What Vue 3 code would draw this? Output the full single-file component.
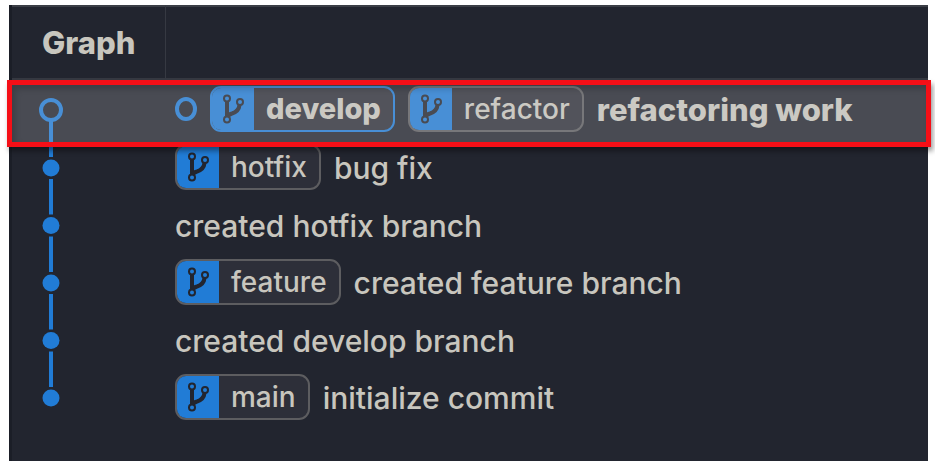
<script setup>
const commits = [
  { message: 'refactoring work', branches: ['develop', 'refactor'], head: true },
  { message: 'bug fix', branches: ['hotfix'] },
  { message: 'created hotfix branch', branches: [] },
  { message: 'created feature branch', branches: ['feature'] },
  { message: 'created develop branch', branches: [] },
  { message: 'initialize commit', branches: ['main'] },
]
const isCurrent = (commit, name) => Boolean(commit.head) && name === commit.branches[0]
</script>

<template>
  <main class="page">
    <table class="log">
      <thead>
        <tr>
          <th class="graph-head" scope="col">Graph</th>
          <td class="message-head"></td>
        </tr>
      </thead>
      <tbody>
        <tr v-for="(commit, i) in commits" :key="commit.message" class="row" :class="{ head: commit.head }">
          <td class="graph">
            <svg class="track" viewBox="0 0 26 58" preserveAspectRatio="xMidYMid slice" aria-hidden="true">
              <path v-if="i > 0" class="line" d="M13 0V19" />
              <path v-if="i < commits.length - 1" class="line" d="M13 41V58" />
              <circle v-if="commit.head" class="ring" cx="13" cy="30" r="10" />
              <circle v-else class="dot" cx="13" cy="30" r="8.5" />
            </svg>
          </td>
          <td class="description">
            <div class="content">
              <svg v-if="commit.head" class="marker" viewBox="0 0 22 24" aria-hidden="true">
                <ellipse class="marker-ring" cx="11" cy="12" rx="9" ry="10" />
              </svg>
              <span
                v-for="name in commit.branches"
                :key="name"
                class="branch"
                :class="{ current: isCurrent(commit, name) }"
              >
                <span class="badge">
                  <svg class="icon" viewBox="0 0 22 30" aria-hidden="true">
                    <path class="stem" d="M5 8V22" />
                    <path class="stem" d="M17.5 11C17 17 13 18.500 10 19.500Q6 20.500 5 24" />
                    <circle class="node" cx="5" cy="4.500" r="3" />
                    <circle class="node" cx="18" cy="8" r="3" />
                    <circle class="node" cx="5" cy="25.500" r="3" />
                  </svg>
                </span>
                <span class="name">{{ name }}</span>
              </span>
              <span class="message">{{ commit.message }}</span>
            </div>
            <div v-if="commit.head" class="highlight"></div>
          </td>
        </tr>
      </tbody>
    </table>
  </main>
</template>

<style>
body {
  background: #fff;
}
</style>

<style scoped>
.page {
  box-sizing: border-box;
  min-height: calc(100vh - 12px);
  margin: 5px 7px 7px 9px;
  background: #22252f;
  border-left: 3px solid #1b1e27;
  font-family: Inter, "Liberation Sans", sans-serif;
  font-size: 30px;
  font-weight: 500;
  line-height: 36px;
  color: #c8c6be;
}
.log {
  width: 100%;
  border-collapse: separate;
  border-spacing: 0;
}
.log th,
.log td {
  padding: 0;
}
.graph-head,
.message-head {
  box-sizing: border-box;
  height: 75px;
  border-top: 2px solid #3b3e46;
  border-bottom: 2px solid #363942;
}
.log .graph-head {
  width: 154px;
  padding-left: 30px;
  border-right: 1px solid #363942;
  text-align: left;
  font-size: 31px;
  font-weight: 800;
}
.row {
  position: relative;
}
.graph,
.description,
.track {
  height: 58px;
}
.row:nth-child(2n + 3) .graph,
.row:nth-child(2n + 3) .description,
.row:nth-child(2n + 3) .track {
  height: 57px;
}
.log .graph {
  padding-left: 26px;
}
.log .description {
  padding-left: 9px;
}
.track {
  display: block;
  width: 26px;
}
.line {
  fill: none;
  stroke: #217cd6;
  stroke-width: 4;
}
.dot {
  fill: #217cd6;
}
.ring,
.marker-ring {
  fill: none;
  stroke: #217cd6;
  stroke-width: 4;
}
.content {
  display: flex;
  align-items: center;
  gap: 13px;
  white-space: nowrap;
}
.marker {
  width: 22px;
  height: 24px;
}
.branch {
  display: flex;
  box-sizing: border-box;
  height: 46px;
  overflow: hidden;
  border: 2px solid #5d5d60;
  border-radius: 11px;
  background: #2d2f39;
  font-size: 28px;
}
.current {
  border-color: #217cd6;
}
.badge {
  display: flex;
  align-items: center;
  justify-content: center;
  width: 42px;
  background: #217cd6;
}
.icon {
  width: 22px;
  height: 30px;
}
.stem {
  fill: none;
  stroke: #22252f;
  stroke-width: 4;
}
.node {
  fill: #217cd6;
  stroke: #22252f;
  stroke-width: 2;
}
.name {
  padding: 3px 12px;
}
.message {
  padding-top: 2px;
}
.current .name {
  font-size: 29px;
  font-weight: 800;
}
.head .message {
  font-size: 31px;
  font-weight: 800;
}
.highlight {
  position: absolute;
  z-index: 2;
  inset: 0 -3px -9px -5px;
  border: 5px solid #f50f17;
  background: rgba(215, 215, 215, 0.22);
  box-shadow: 2px 4px 5px rgba(0, 0, 0, 0.4), inset 3px 4px 6px rgba(0, 0, 0, 0.18);
}
</style>
